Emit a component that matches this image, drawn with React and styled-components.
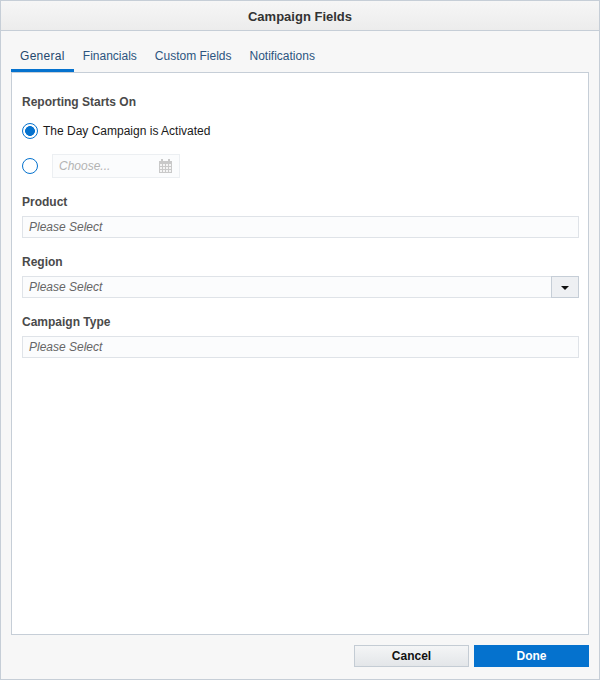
import React, { useState } from "react";
import styled, { createGlobalStyle } from "styled-components";

const GlobalStyle = createGlobalStyle`
  html, body {
    margin: 0;
    padding: 0;
    background: #ffffff;
  }
  body {
    font-family: "Liberation Sans", Arial, sans-serif;
    font-size: 12px;
  }
`;

const tabs = ["General", "Financials", "Custom Fields", "Notifications"];

const fields = [
  { label: "Product", dropdown: false },
  { label: "Region", dropdown: true },
  { label: "Campaign Type", dropdown: false },
];

function CalendarIcon() {
  return (
    <svg width="13" height="14" viewBox="0 0 13 14">
      <rect x="2" y="0" width="2" height="3" fill="#c9c9c9" />
      <rect x="9" y="0" width="2" height="3" fill="#c9c9c9" />
      <rect x="0" y="2" width="13" height="12" fill="#c9c9c9" />
      {[0, 1, 2].map((r) =>
        [0, 1, 2, 3].map((c) => (
          <rect
            key={`${r}-${c}`}
            x={1 + c * 3}
            y={5 + r * 3}
            width="2"
            height="2"
            fill="#f4f4f4"
          />
        ))
      )}
    </svg>
  );
}

export default function App() {
  const [activeTab, setActiveTab] = useState("General");
  const [startOption, setStartOption] = useState("activated");

  return (
    <>
      <GlobalStyle />
      <Window>
        <Header>Campaign Fields</Header>
        <TabBar>
          {tabs.map((tab) => (
            <Tab
              key={tab}
              $active={activeTab === tab}
              onClick={() => setActiveTab(tab)}
            >
              {tab}
            </Tab>
          ))}
        </TabBar>
        <Panel>
          <Section>
            <Label>Reporting Starts On</Label>
            <RadioRow onClick={() => setStartOption("activated")}>
              <Radio $checked={startOption === "activated"} />
              <RadioText>The Day Campaign is Activated</RadioText>
            </RadioRow>
            <RadioRow $tall onClick={() => setStartOption("date")}>
              <Radio $checked={startOption === "date"} />
              <DateBox>
                <span>Choose...</span>
                <CalendarIcon />
              </DateBox>
            </RadioRow>
          </Section>
          {fields.map((field) => (
            <Section key={field.label}>
              <Label>{field.label}</Label>
              <SelectBox>
                <Placeholder>Please Select</Placeholder>
                {field.dropdown && (
                  <DropButton>
                    <Caret />
                  </DropButton>
                )}
              </SelectBox>
            </Section>
          ))}
        </Panel>
        <Footer>
          <Button>Cancel</Button>
          <Button $primary>Done</Button>
        </Footer>
      </Window>
    </>
  );
}

const Window = styled.div`
  width: 600px;
  height: 680px;
  box-sizing: border-box;
  border: 1px solid #c6ced7;
  background: #f7f7f7;
  display: flex;
  flex-direction: column;
`;

const Header = styled.div`
  height: 30px;
  box-sizing: border-box;
  border-bottom: 1px solid #c6ced7;
  background: linear-gradient(#f6f6f6, #ececec);
  display: flex;
  align-items: center;
  justify-content: center;
  font-size: 13px;
  font-weight: bold;
  color: #333333;
  padding-top: 2px;
`;

const TabBar = styled.div`
  display: flex;
  margin: 0 10px;
  height: 41px;
`;

const Tab = styled.div`
  box-sizing: border-box;
  padding: 18px 9px 6px;
  line-height: 14px;
  font-size: 12px;
  color: ${(p) => (p.$active ? "#24486e" : "#2c5580")};
  border-bottom: 3px solid ${(p) => (p.$active ? "#0572ce" : "transparent")};
  cursor: pointer;
  white-space: nowrap;
  &:first-child {
    letter-spacing: 0.3px;
  }
`;

const Panel = styled.div`
  flex: 1;
  margin: 0 10px;
  background: #ffffff;
  border: 1px solid #c6ced7;
  padding: 20px 9px 0 10px;
  display: flex;
  flex-direction: column;
  gap: 15px;
`;

const Section = styled.div`
  display: flex;
  flex-direction: column;
`;

const Label = styled.div`
  font-size: 12px;
  font-weight: bold;
  line-height: 16px;
  padding-top: 1px;
  color: #4a4a4a;
  margin-bottom: 6px;
`;

const RadioRow = styled.div`
  display: flex;
  align-items: center;
  height: ${(p) => (p.$tall ? "24px" : "20px")};
  margin-top: ${(p) => (p.$tall ? "13px" : "5px")};
  cursor: pointer;
`;

const Radio = styled.span`
  width: 16px;
  height: 16px;
  box-sizing: border-box;
  border-radius: 50%;
  border: 1.5px solid #0572ce;
  background: ${(p) =>
    p.$checked
      ? "radial-gradient(circle, #0572ce 0, #0572ce 4.6px, #ffffff 5.2px)"
      : "#ffffff"};
  flex-shrink: 0;
`;

const RadioText = styled.span`
  margin-left: 5px;
  color: #1a1a1a;
  font-size: 12px;
`;

const DateBox = styled.div`
  margin-left: 14px;
  width: 128px;
  height: 24px;
  box-sizing: border-box;
  border: 1px solid #eceff2;
  background: #fbfcfd;
  display: flex;
  align-items: center;
  justify-content: space-between;
  padding: 0 7px 0 6px;
  span {
    font-style: italic;
    color: #b3b3b3;
    font-size: 12px;
  }
`;

const SelectBox = styled.div`
  height: 22px;
  box-sizing: border-box;
  border: 1px solid #dfe3e8;
  background: #fbfcfd;
  display: flex;
  align-items: center;
`;

const Placeholder = styled.span`
  flex: 1;
  padding-left: 6px;
  font-style: italic;
  color: #666666;
  font-size: 12px;
`;

const DropButton = styled.div`
  width: 28px;
  height: 22px;
  margin: -1px -1px -1px 0;
  box-sizing: border-box;
  border: 1px solid #c6ced7;
  background: #eef0f3;
  display: flex;
  align-items: center;
  justify-content: center;
`;

const Caret = styled.span`
  width: 0;
  height: 0;
  border-left: 4px solid transparent;
  border-right: 4px solid transparent;
  border-top: 4px solid #111111;
  margin-top: 1px;
`;

const Footer = styled.div`
  display: flex;
  justify-content: flex-end;
  gap: 5px;
  padding: 10px 10px 12px;
`;

const Button = styled.button`
  width: 115px;
  height: 22px;
  box-sizing: border-box;
  font-family: "Liberation Sans", Arial, sans-serif;
  font-size: 12px;
  font-weight: bold;
  cursor: pointer;
  border: 1px solid ${(p) => (p.$primary ? "#0572ce" : "#c4ccd4")};
  background: ${(p) =>
    p.$primary ? "#0572ce" : "linear-gradient(#f4f5f6, #e3e6e9)"};
  color: ${(p) => (p.$primary ? "#ffffff" : "#111111")};
  padding: 0;
`;
